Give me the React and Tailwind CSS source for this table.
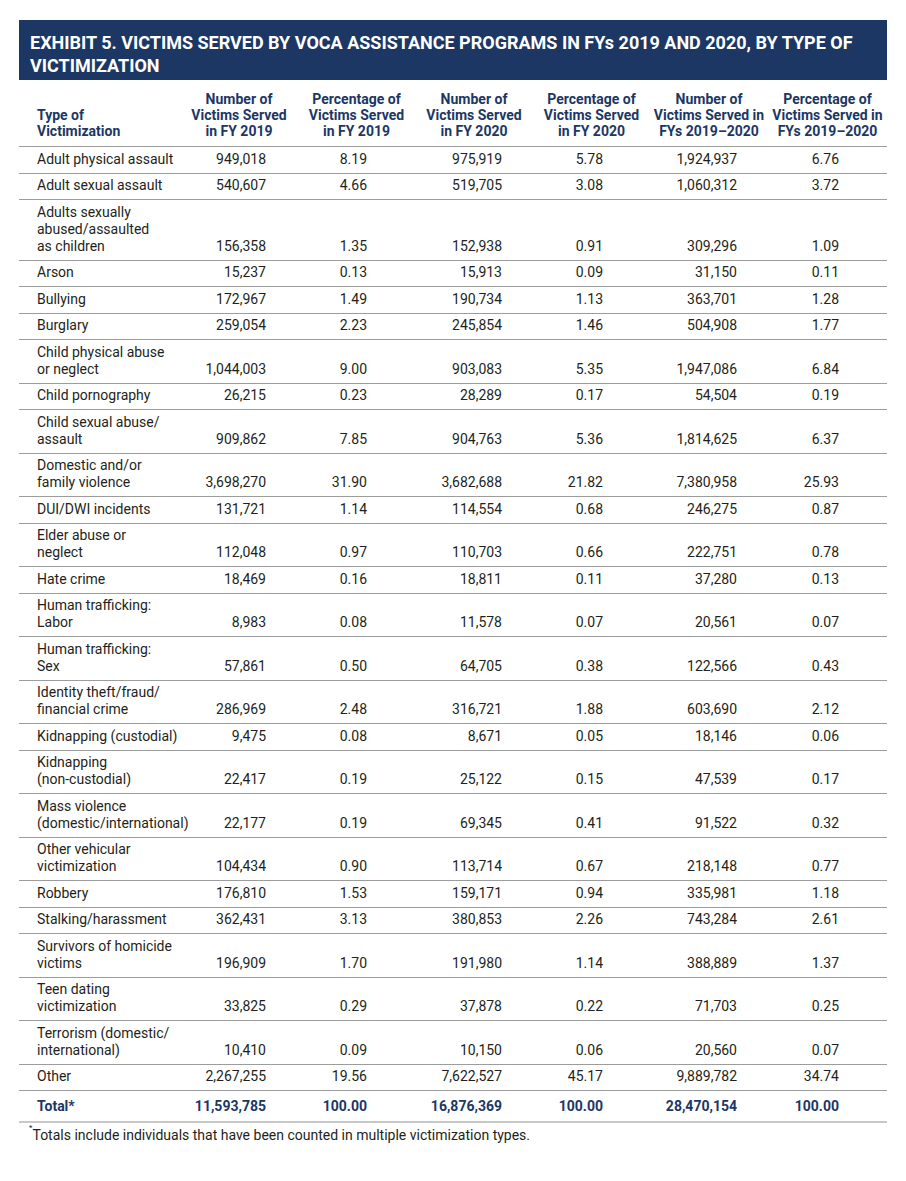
import React from 'react';

const NAVY = 'text-[#1c3764]';

const headers = [
	['Number of', 'Victims Served', 'in FY 2019'],
	['Percentage of', 'Victims Served', 'in FY 2019'],
	['Number of', 'Victims Served', 'in FY 2020'],
	['Percentage of', 'Victims Served', 'in FY 2020'],
	['Number of', 'Victims Served in', 'FYs 2019–2020'],
	['Percentage of', 'Victims Served in', 'FYs 2019–2020'],
];

const rows = [
	[['Adult physical assault'], '949,018', '8.19', '975,919', '5.78', '1,924,937', '6.76'],
	[['Adult sexual assault'], '540,607', '4.66', '519,705', '3.08', '1,060,312', '3.72'],
	[['Adults sexually', 'abused/assaulted', 'as children'], '156,358', '1.35', '152,938', '0.91', '309,296', '1.09'],
	[['Arson'], '15,237', '0.13', '15,913', '0.09', '31,150', '0.11'],
	[['Bullying'], '172,967', '1.49', '190,734', '1.13', '363,701', '1.28'],
	[['Burglary'], '259,054', '2.23', '245,854', '1.46', '504,908', '1.77'],
	[['Child physical abuse', 'or neglect'], '1,044,003', '9.00', '903,083', '5.35', '1,947,086', '6.84'],
	[['Child pornography'], '26,215', '0.23', '28,289', '0.17', '54,504', '0.19'],
	[['Child sexual abuse/', 'assault'], '909,862', '7.85', '904,763', '5.36', '1,814,625', '6.37'],
	[['Domestic and/or', 'family violence'], '3,698,270', '31.90', '3,682,688', '21.82', '7,380,958', '25.93'],
	[['DUI/DWI incidents'], '131,721', '1.14', '114,554', '0.68', '246,275', '0.87'],
	[['Elder abuse or', 'neglect'], '112,048', '0.97', '110,703', '0.66', '222,751', '0.78'],
	[['Hate crime'], '18,469', '0.16', '18,811', '0.11', '37,280', '0.13'],
	[['Human trafficking:', 'Labor'], '8,983', '0.08', '11,578', '0.07', '20,561', '0.07'],
	[['Human trafficking:', 'Sex'], '57,861', '0.50', '64,705', '0.38', '122,566', '0.43'],
	[['Identity theft/fraud/', 'financial crime'], '286,969', '2.48', '316,721', '1.88', '603,690', '2.12'],
	[['Kidnapping (custodial)'], '9,475', '0.08', '8,671', '0.05', '18,146', '0.06'],
	[['Kidnapping', '(non-custodial)'], '22,417', '0.19', '25,122', '0.15', '47,539', '0.17'],
	[['Mass violence', '(domestic/international)'], '22,177', '0.19', '69,345', '0.41', '91,522', '0.32'],
	[['Other vehicular', 'victimization'], '104,434', '0.90', '113,714', '0.67', '218,148', '0.77'],
	[['Robbery'], '176,810', '1.53', '159,171', '0.94', '335,981', '1.18'],
	[['Stalking/harassment'], '362,431', '3.13', '380,853', '2.26', '743,284', '2.61'],
	[['Survivors of homicide', 'victims'], '196,909', '1.70', '191,980', '1.14', '388,889', '1.37'],
	[['Teen dating', 'victimization'], '33,825', '0.29', '37,878', '0.22', '71,703', '0.25'],
	[['Terrorism (domestic/', 'international)'], '10,410', '0.09', '10,150', '0.06', '20,560', '0.07'],
	[['Other'], '2,267,255', '19.56', '7,622,527', '45.17', '9,889,782', '34.74'],
];

const total = ['11,593,785', '100.00', '16,876,369', '100.00', '28,470,154', '100.00'];

// right padding per value column (counts vs percentages)
const padR = ['pr-[32px]', 'pr-[48px]', 'pr-[31px]', 'pr-[47px]', 'pr-[31px]', 'pr-[48px]'];

function Lines({ lines }) {
	return lines.map((l, i) => (
		<React.Fragment key={i}>
			{i > 0 && <br />}
			{l}
		</React.Fragment>
	));
}

export default function App() {
	return (
		<div className="min-h-screen bg-white pt-[20px] px-[19px] font-['Roboto',sans-serif] text-[#231f20]">
			<div className="w-[868px]">
				<div className="bg-[#1c3764] text-white font-bold text-[18px] leading-[23px] pl-[11px] pr-[10px] pt-[11px] pb-[3px] uppercase-none">
					EXHIBIT 5. VICTIMS SERVED BY VOCA ASSISTANCE PROGRAMS IN FYs 2019 AND 2020, BY TYPE OF
					<br />
					VICTIMIZATION
				</div>

				<table className="w-[868px] table-fixed border-collapse text-[14px]">
					<colgroup>
						<col className="w-[161px]" />
						<col className="w-[118px]" />
						<col className="w-[117px]" />
						<col className="w-[118px]" />
						<col className="w-[117px]" />
						<col className="w-[118px]" />
						<col className="w-[119px]" />
					</colgroup>
					<thead>
						<tr className="border-b border-[#9c9c9c]">
							<th className={`align-bottom text-left font-bold leading-[16px] pl-[18px] pt-[11px] pb-[7px] ${NAVY}`}>
								Type of
								<br />
								Victimization
							</th>
							{headers.map((h, i) => (
								<th
									key={i}
									className={`align-bottom text-center font-bold leading-[16px] whitespace-nowrap px-0 pt-[11px] pb-[7px] ${NAVY}`}
								>
									<Lines lines={h} />
								</th>
							))}
						</tr>
					</thead>
					<tbody>
						{rows.map((r, ri) => (
							<tr key={ri} className="border-b border-[#9c9c9c]">
								<td className="align-top leading-[17px] whitespace-nowrap pl-[18px] pt-[3.5px] pb-[5px]">
									<Lines lines={r[0]} />
								</td>
								{r.slice(1).map((v, ci) => (
									<td
										key={ci}
										className={`align-bottom text-right leading-[17px] whitespace-nowrap pt-[3.5px] pb-[5px] ${padR[ci]}`}
									>
										{v}
									</td>
								))}
							</tr>
						))}
						<tr className="border-b-2 border-[#c8c8c8]">
							<td className={`font-bold leading-[17px] pl-[18px] pt-[7px] pb-[5.5px] ${NAVY}`}>Total*</td>
							{total.map((v, ci) => (
								<td
									key={ci}
									className={`text-right font-bold leading-[17px] pt-[7px] pb-[5.5px] ${padR[ci]} ${NAVY}`}
								>
									{v}
								</td>
							))}
						</tr>
					</tbody>
				</table>

				<p className="pl-[10px] pt-[4px] text-[14px] leading-[17px]">
					<sup className="text-[8px] align-top relative top-[1px]">*</sup>
					Totals include individuals that have been counted in multiple victimization types.
				</p>
			</div>
		</div>
	);
}
